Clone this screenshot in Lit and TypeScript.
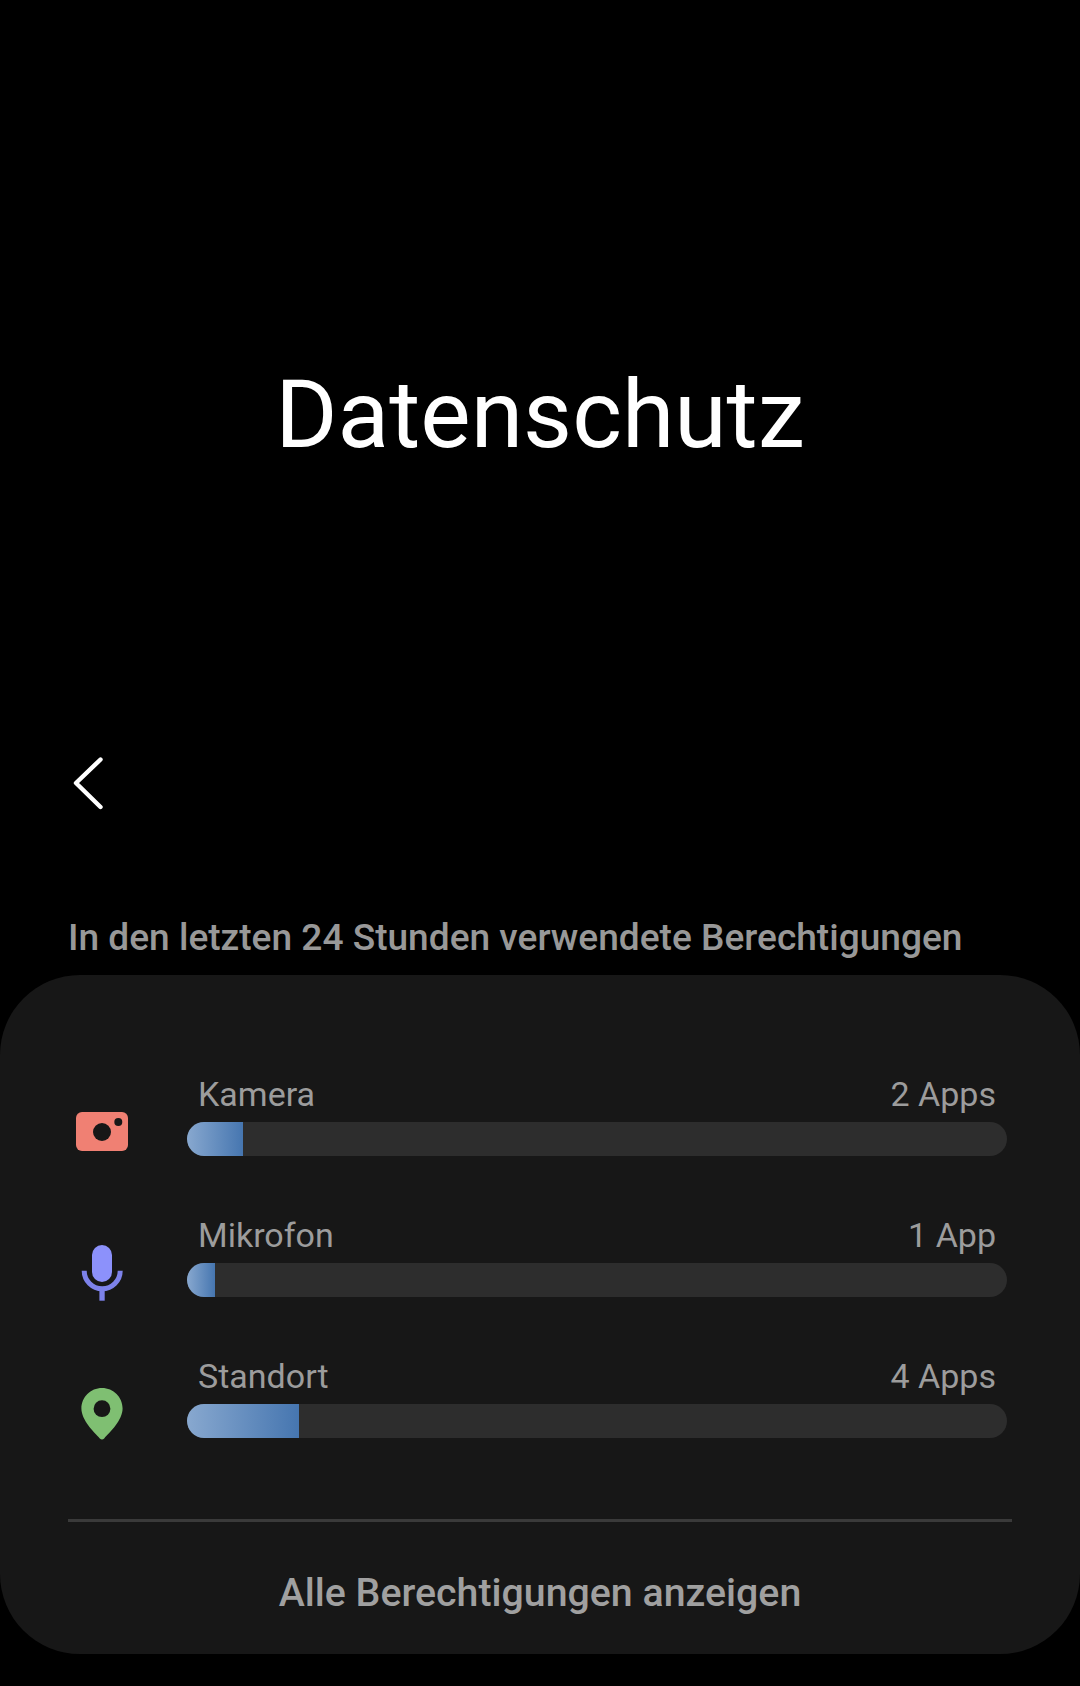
import { LitElement, html, css } from 'lit';
import { customElement } from 'lit/decorators.js';

const APP_WIDTH = 28;

const cameraIcon = html`<svg viewBox="0 0 60 60" width="60" height="60">
  <rect x="4" y="10" width="52" height="39" rx="6" fill="#f08073"></rect>
  <circle cx="30" cy="30" r="9" fill="#171717"></circle>
  <circle cx="46.3" cy="20" r="4" fill="#171717"></circle>
</svg>`;

const micIcon = html`<svg viewBox="0 0 60 60" width="60" height="60">
  <rect x="20" y="2" width="20" height="37" rx="10" fill="#8c91fb"></rect>
  <path d="M12.2 27.7A18 18 0 0 0 48.2 27.7" fill="none" stroke="#7d82ea" stroke-width="5"></path>
  <rect x="27.4" y="46" width="5.3" height="11.7" fill="#7d82ea"></rect>
</svg>`;

const pinIcon = html`<svg viewBox="0 0 60 60" width="60" height="60">
  <path d="M30 4C41.4 4 50.6 13.2 50.6 24.6C50.6 36 38 48.5 32.2 54.4Q30 56.4 27.8 54.4C22 48.5 9.4 36 9.4 24.6C9.4 13.2 18.6 4 30 4Z" fill="#7fbf72"></path>
  <circle cx="30" cy="24.7" r="8.4" fill="#171717"></circle>
</svg>`;

const rows = [
  { name: 'Kamera', count: '2 Apps', apps: 2, icon: cameraIcon },
  { name: 'Mikrofon', count: '1 App', apps: 1, icon: micIcon },
  { name: 'Standort', count: '4 Apps', apps: 4, icon: pinIcon },
];

@customElement('app-root')
export class AppRoot extends LitElement {
  static styles = css`
    :host {
      display: block;
      width: 1080px;
      height: 1686px;
      background: #000;
      font-family: Roboto, sans-serif;
      overflow: hidden;
    }
    .title {
      margin: 0;
      padding-top: 365px;
      font-size: 95px;
      line-height: 100px;
      font-weight: 400;
      color: #fff;
      text-align: center;
    }
    .back {
      display: block;
      margin: 287px 0 0 70px;
    }
    .section {
      margin: 101px 0 0 68px;
      font-size: 37.1px;
      line-height: 50px;
      font-weight: 500;
      color: #989898;
    }
    .card {
      margin-top: 12px;
      height: 679px;
      box-sizing: border-box;
      padding-top: 91px;
      background: #171717;
      border-radius: 80px;
    }
    .row {
      display: flex;
      align-items: flex-start;
      height: 141px;
      padding-left: 72px;
    }
    .icon {
      width: 60px;
      height: 60px;
      margin-top: 36px;
      flex: none;
    }
    .body {
      width: 820px;
      margin-left: 55px;
    }
    .labels {
      display: flex;
      justify-content: space-between;
      padding: 0 11px;
      font-size: 34px;
      line-height: 56px;
      color: #9c9c9c;
    }
    .track {
      height: 34px;
      border-radius: 17px;
      background: #2d2d2d;
      overflow: hidden;
    }
    .fill {
      height: 100%;
      background: linear-gradient(90deg, #88a8cf, #4676b0);
    }
    .divider {
      height: 3px;
      margin: 30px 68px 0;
      background: #3a3a3a;
    }
    .all {
      padding-top: 46px;
      font-size: 39.3px;
      line-height: 50px;
      font-weight: 500;
      color: #a0a0a0;
      text-align: center;
    }
  `;

  render() {
    return html`
      <h1 class="title">Datenschutz</h1>
      <svg class="back" viewBox="0 0 40 60" width="40" height="60">
        <path d="M30.5 7.5L6 31L30.5 55" fill="none" stroke="#fff" stroke-width="4.4" stroke-linecap="round" stroke-linejoin="round"></path>
      </svg>
      <div class="section">In den letzten 24 Stunden verwendete Berechtigungen</div>
      <div class="card">
        ${rows.map(
          (r) => html`
            <div class="row">
              <div class="icon">${r.icon}</div>
              <div class="body">
                <div class="labels"><span>${r.name}</span><span>${r.count}</span></div>
                <div class="track">
                  <div class="fill" style="width: ${r.apps * APP_WIDTH}px"></div>
                </div>
              </div>
            </div>
          `
        )}
        <div class="divider"></div>
        <div class="all">Alle Berechtigungen anzeigen</div>
      </div>
    `;
  }
}
